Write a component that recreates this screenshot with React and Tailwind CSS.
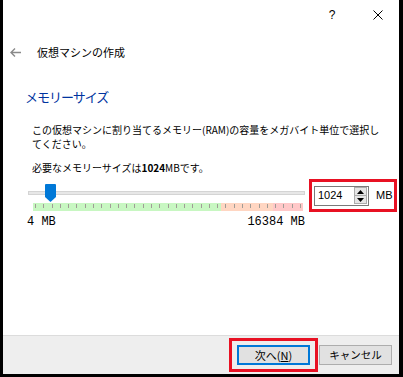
import React from "react";

const jp = { fontFamily: '"Noto Sans CJK JP", "Noto Sans", sans-serif' };

const ticks = Array.from({ length: 33 });

const MemorySlider = () => (
  <div className="relative w-[277px] pt-[12px]">
    {/* track */}
    <div className="h-[4px] bg-[#e7e7e7] border border-[#d4d4d4]" />
    {/* thumb */}
    <svg className="absolute left-[17px] top-[5px]" width="11" height="18" viewBox="0 0 11 18">
      <path d="M1 0 H10 Q11 0 11 1 V13 L5.5 18 L0 13 V1 Q0 0 1 0 Z" fill="#0078d7" />
    </svg>
    {/* memory ranges */}
    <div className="relative ml-[5px] mr-[2px] mt-[8px] h-[8px] flex">
      <div className="w-[188px] bg-[#c8f7c2]" />
      <div className="w-[52px] bg-[#ffd6c2]" />
      <div className="flex-1 bg-[#ffc8c8]" />
      <div className="absolute inset-0 flex justify-between px-[2px]">
        {ticks.map((_, i) => (
          <div key={i} className="w-px h-[4px] mt-[1px] bg-[#a09c96]" />
        ))}
      </div>
    </div>
    <div
      className="mt-[5px] h-[12px] flex justify-between items-center text-[12px] leading-[12px] text-black"
      style={{ fontFamily: '"Liberation Mono", monospace' }}
    >
      <span className="-ml-px">4 MB</span>
      <span>16384 MB</span>
    </div>
  </div>
);

const SpinBox = () => (
  <div className="w-[55px] h-[20px] bg-white border border-[#7a7a7a] flex items-center justify-between pl-[3px] pr-px">
    <span className="text-[11px] text-black" style={{ fontFamily: '"Liberation Sans", sans-serif' }}>
      1024
    </span>
    <div className="w-[13px] h-[17px] flex flex-col bg-[#e5e5e5] border border-[#acacac]">
      <div className="flex-1 flex items-center justify-center border-b border-[#acacac]">
        <svg width="7" height="4" viewBox="0 0 7 4"><path d="M0 4 L3.5 0 L7 4 Z" fill="#000" /></svg>
      </div>
      <div className="flex-1 flex items-center justify-center">
        <svg width="7" height="4" viewBox="0 0 7 4"><path d="M0 0 L7 0 L3.5 4 Z" fill="#000" /></svg>
      </div>
    </div>
  </div>
);

export default function App() {
  return (
    <div
      className="w-[403px] h-[377px] bg-white border-l-[3px] border-r-[4px] border-b-[3px] border-black flex flex-col text-black"
      style={jp}
    >
      {/* title bar */}
      <div className="h-[30px] flex items-center justify-end gap-[36px] pr-[16px]">
        <span className="w-[10px] text-center text-[12px]" style={{ fontFamily: '"Liberation Sans", sans-serif' }}>
          ?
        </span>
        <svg width="10" height="10" viewBox="0 0 10 10">
          <path d="M0.5 0.5 L9.5 9.5 M9.5 0.5 L0.5 9.5" stroke="#000" strokeWidth="1" />
        </svg>
      </div>

      {/* back + wizard title */}
      <div className="h-[45px] flex items-center pl-[7px] gap-[16px]">
        <svg width="11" height="9" viewBox="0 0 11 9">
          <path d="M5 0.5 L1 4.5 L5 8.5 M1 4.5 H11" stroke="#8a8a8a" strokeWidth="1.4" fill="none" />
        </svg>
        <span className="text-[11px]">仮想マシンの作成</span>
      </div>

      {/* page heading */}
      <h1 className="mt-[12px] pl-[22px] h-[20px] leading-[20px] text-[13px] tracking-[-1px] text-[#0033a0]">
        メモリーサイズ
      </h1>

      <p className="mt-[16px] pl-[29px] text-[10px] leading-[14px]">
        この仮想マシンに割り当てるメモリー(RAM)の容量をメガバイト単位で選択し
        <br />
        てください。
      </p>

      <p className="mt-[11px] pl-[29px] text-[10px] leading-[12px]">
        必要なメモリーサイズは<b className="font-bold">1024</b>MBです。
      </p>

      {/* slider + spin box */}
      <div className="mt-[5px] pl-[25px] flex items-start gap-[4px]">
        <MemorySlider />
        <div className="w-[88px] h-[33px] border-[3px] border-[#e81123] flex items-center pl-[2px] gap-[7px]">
          <SpinBox />
          <span className="text-[11px]" style={{ fontFamily: '"Liberation Sans", sans-serif' }}>
            MB
          </span>
        </div>
      </div>

      <div className="flex-1" />

      {/* footer */}
      <div className="h-[39px] bg-[#eeeeee] border-t border-[#dcdcdc] flex items-center justify-end pr-[7px] gap-px">
        <div className="border-[3px] border-[#e81123] px-[5px] py-[4px]">
          <button className="w-[73px] h-[20px] bg-[#e1e1e1] border-2 border-[#0078d7] text-[11px] leading-none flex items-center justify-center">
            次へ(<span className="underline">N</span>)
          </button>
        </div>
        <button className="w-[73px] h-[20px] bg-[#e1e1e1] border border-[#adadad] text-[10.5px] leading-none flex items-center justify-center">
          キャンセル
        </button>
      </div>
    </div>
  );
}
